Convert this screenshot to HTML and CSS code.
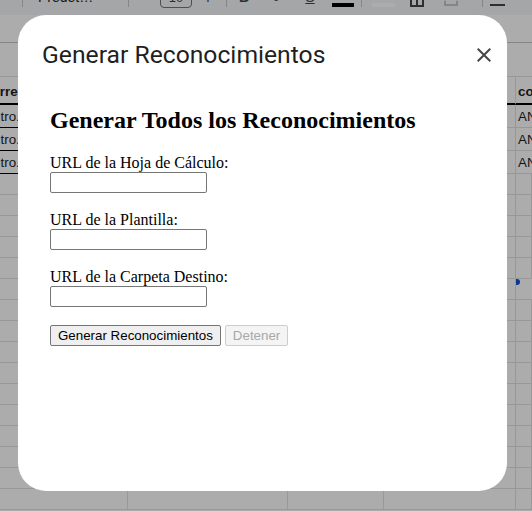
FILE: index.html
```html
<!DOCTYPE html>
<html lang="es">
<head>
<meta charset="utf-8">
<title>Generar Reconocimientos</title>
<link rel="stylesheet" href="styles.css">
</head>
<body>
<div class="sheet">
  <div class="toolbar">
    <span class="sep s1"></span>
    <span class="tb-text font">Predeterminado</span>
    <span class="sep s2"></span>
    <span class="size-box">10</span>
    <span class="tb-text plus">+</span>
    <span class="sep s3"></span>
    <span class="tb-text bold">B</span>
    <span class="tb-text ital">I</span>
    <span class="tb-text strike">S</span>
    <span class="color-bar"></span>
    <span class="sep s4"></span>
    <span class="fill-bar"></span>
    <span class="icon-borders"></span>
    <span class="icon-merge"></span>
    <span class="sep s5"></span>
    <span class="icon-align"></span>
  </div>
  <div class="formula-bar"></div>
  <div class="col-headers"></div>
  <div class="grid">
    <div class="row head">
      <div class="cell c1"><span class="cut">Correo</span></div><div class="cell"></div><div class="cell"></div><div class="cell"></div><div class="cell c5">correo</div>
    </div>
    <div class="row data">
      <div class="cell c1"><span class="cut2">centro.cl</span></div><div class="cell"></div><div class="cell"></div><div class="cell"></div><div class="cell c5">ANA</div>
    </div>
    <div class="row data">
      <div class="cell c1"><span class="cut2">centro.cl</span></div><div class="cell"></div><div class="cell"></div><div class="cell"></div><div class="cell c5">ANA</div>
    </div>
    <div class="row data">
      <div class="cell c1"><span class="cut2">centro.cl</span></div><div class="cell"></div><div class="cell"></div><div class="cell"></div><div class="cell c5">ANA</div>
    </div>
    <div class="row"><div class="cell"></div><div class="cell"></div><div class="cell"></div><div class="cell"></div><div class="cell"></div></div>
    <div class="row"><div class="cell"></div><div class="cell"></div><div class="cell"></div><div class="cell"></div><div class="cell"></div></div>
    <div class="row"><div class="cell"></div><div class="cell"></div><div class="cell"></div><div class="cell"></div><div class="cell"></div></div>
    <div class="row"><div class="cell"></div><div class="cell"></div><div class="cell"></div><div class="cell"></div><div class="cell"></div></div>
    <div class="row"><div class="cell"></div><div class="cell"></div><div class="cell"></div><div class="cell"></div><div class="cell"></div></div>
    <div class="row"><div class="cell"></div><div class="cell"></div><div class="cell"></div><div class="cell"></div><div class="cell c5"><span class="handle"></span></div></div>
    <div class="row"><div class="cell"></div><div class="cell"></div><div class="cell"></div><div class="cell"></div><div class="cell"></div></div>
    <div class="row"><div class="cell"></div><div class="cell"></div><div class="cell"></div><div class="cell"></div><div class="cell"></div></div>
    <div class="row"><div class="cell"></div><div class="cell"></div><div class="cell"></div><div class="cell"></div><div class="cell"></div></div>
    <div class="row"><div class="cell"></div><div class="cell"></div><div class="cell"></div><div class="cell"></div><div class="cell"></div></div>
    <div class="row"><div class="cell"></div><div class="cell"></div><div class="cell"></div><div class="cell"></div><div class="cell"></div></div>
    <div class="row"><div class="cell"></div><div class="cell"></div><div class="cell"></div><div class="cell"></div><div class="cell"></div></div>
    <div class="row"><div class="cell"></div><div class="cell"></div><div class="cell"></div><div class="cell"></div><div class="cell"></div></div>
    <div class="row"><div class="cell"></div><div class="cell"></div><div class="cell"></div><div class="cell"></div><div class="cell"></div></div>
    <div class="row"><div class="cell"></div><div class="cell"></div><div class="cell"></div><div class="cell"></div><div class="cell"></div></div>
    <div class="row"><div class="cell"></div><div class="cell"></div><div class="cell"></div><div class="cell"></div><div class="cell"></div></div>
  </div>
</div>
<div class="scrim"></div>
<div class="dialog" role="dialog" aria-labelledby="dlg-title">
  <div class="dlg-head">
    <h1 class="dlg-title" id="dlg-title">Generar Reconocimientos</h1>
    <button class="close" aria-label="Cerrar">
      <svg viewBox="0 0 24 24" width="24" height="24"><path d="M19 6.41L17.59 5 12 10.59 6.41 5 5 6.41 10.59 12 5 17.59 6.41 19 12 13.41 17.59 19 19 17.59 13.41 12z"/></svg>
    </button>
  </div>
  <div class="dlg-body">
    <h2 class="page-title">Generar Todos los Reconocimientos</h2>
    <label class="field-label" for="sheetUrl">URL de la Hoja de Cálculo:</label><br>
    <input class="field" type="text" id="sheetUrl"><br><br>
    <label class="field-label" for="templateUrl">URL de la Plantilla:</label><br>
    <input class="field" type="text" id="templateUrl"><br><br>
    <label class="field-label" for="folderUrl">URL de la Carpeta Destino:</label><br>
    <input class="field" type="text" id="folderUrl"><br><br>
    <button class="btn">Generar Reconocimientos</button>
    <button class="btn" disabled>Detener</button>
  </div>
</div>
</body>
</html>
```

FILE: styles.css
```css
* { box-sizing: border-box; }

html, body {
  margin: 0;
  padding: 0;
}

body {
  width: 532px;
  height: 511px;
  overflow: hidden;
  position: relative;
  font-family: "Liberation Sans", Arial, sans-serif;
  background: #fff;
}

/* ---------- background spreadsheet ---------- */
.sheet {
  display: flex;
  flex-direction: column;
  height: 511px;
  background: #fff;
}

.toolbar {
  flex: 0 0 15px;
  height: 15px;
  background: #f3f6fa;
  display: flex;
  align-items: flex-start;
  overflow: hidden;
  color: #444746;
}

.sep {
  flex: 0 0 1px;
  width: 1px;
  height: 20px;
  margin-top: -13px;
  background: #c7c7c7;
}
.s1 { margin-left: 22px; }
.s2 { margin-left: 34px; }
.s3 { margin-left: 11px; }
.s4 { margin-left: 7px; }
.s5 { margin-left: 24px; }

.tb-text {
  flex: 0 0 14px;
  width: 14px;
  font-size: 14px;
  line-height: 20px;
  margin-top: -13px;
  white-space: nowrap;
  text-align: center;
  overflow: hidden;
}
.font {
  flex: 0 0 56px;
  width: 56px;
  margin-left: 15px;
  text-align: left;
  text-overflow: ellipsis;
  color: #1f1f1f;
}
.plus { margin-left: 9px; font-size: 16px; margin-top: -12px; }
.bold { margin-left: 10px; font-weight: bold; }
.ital { margin-left: 18px; font-family: "Liberation Serif", serif; }
.strike { margin-left: 20px; text-decoration: underline; }

.size-box {
  flex: 0 0 32px;
  margin-left: 31px;
  width: 32px;
  height: 20px;
  margin-top: -12px;
  border: 1px solid #747775;
  border-radius: 4px;
  font-size: 13px;
  line-height: 18px;
  text-align: center;
}

.color-bar {
  flex: 0 0 22px;
  margin-left: 15px;
  width: 22px;
  height: 4px;
  margin-top: 3px;
  background: #000;
}
.fill-bar {
  flex: 0 0 23px;
  margin-left: 10px;
  width: 23px;
  height: 4px;
  margin-top: 3px;
  background: #fff;
}
.icon-borders {
  flex: 0 0 14px;
  margin-left: 15px;
  width: 14px;
  height: 14px;
  margin-top: -7px;
  border: 2px solid #444746;
  border-top: 0;
  background: linear-gradient(#444746, #444746) center / 2px 100% no-repeat;
}
.icon-merge {
  flex: 0 0 14px;
  margin-left: 20px;
  width: 14px;
  height: 14px;
  margin-top: -8px;
  border: 2px solid #c4c7c5;
  border-top: 0;
  border-left-style: dashed;
  border-right-style: dashed;
}
.icon-align {
  flex: 0 0 15px;
  margin-left: 7px;
  width: 15px;
  height: 8px;
  margin-top: -2px;
  border-bottom: 2px solid #444746;
  background: linear-gradient(#444746, #444746) left top / 15px 2px no-repeat;
}

.formula-bar {
  flex: 0 0 28px;
  background: #fff;
  border-bottom: 1px solid #c7c7c7;
}
.col-headers {
  flex: 0 0 34px;
  background: #fff;
  border-bottom: 1px solid #e1e1e1;
}

.grid {
  display: flex;
  flex-direction: column;
}

.row {
  display: grid;
  grid-template-columns: 128px 160px 96px 132px 1fr;
  height: 21px;
  font-size: 13.33px;
  color: #1f1f1f;
}
.row.head { height: 28px; font-weight: bold; }
.row.data { height: 23px; }

.cell {
  border-right: 1px solid #e1e1e1;
  border-bottom: 1px solid #e1e1e1;
  display: flex;
  align-items: flex-end;
  padding: 0 3px 2px 3px;
  overflow: hidden;
  white-space: nowrap;
  line-height: 16px;
  position: relative;
}
.row.head .cell { border-bottom: 2px solid #000; padding-bottom: 3px; }
.row.data .c1 { border-bottom-color: #000; }
.c1 { padding-left: 0; }
.c5 { padding-left: 2px; border-right: 0; }

.cut { margin-left: -18px; }
.cut2 { margin-left: -21px; }

.handle {
  position: absolute;
  left: 0;
  top: 0;
  width: 4px;
  height: 6px;
  border-radius: 0 4px 4px 0;
  background: #0b57d0;
}

.scrim {
  position: absolute;
  inset: 0;
  background: rgba(0, 0, 0, 0.325);
}

/* ---------- dialog ---------- */
.dialog {
  position: absolute;
  left: 18px;
  top: 15px;
  width: 489px;
  height: 476px;
  border-radius: 28px;
  background: #fff;
  display: flex;
  flex-direction: column;
  overflow: hidden;
}

.dlg-head {
  display: flex;
  align-items: center;
  padding: 24px 11px 15px 24px;
}

.dlg-title {
  flex: 1;
  margin: 0;
  font-family: Roboto, "Noto Sans", sans-serif;
  font-weight: 400;
  font-size: 24.7px;
  line-height: 32px;
  color: #1f1f1f;
}

.close {
  width: 24px;
  height: 24px;
  padding: 0;
  border: 0;
  background: transparent;
  display: flex;
  align-items: center;
  justify-content: center;
}
.close svg { display: block; fill: #444746; }

.dlg-body {
  flex: 1;
  padding: 0 0 0 32px;
  font-family: "Liberation Serif", "Times New Roman", serif;
  font-size: 16px;
  color: #000;
}

.page-title {
  margin: 21px 0 20px;
  font-size: 24px;
  font-weight: bold;
}

.field-label { font-size: 16px; }

.field {
  width: 157px;
  height: 21px;
  padding: 1px 2px;
  border: 1px solid #767676;
  border-radius: 2px;
  font-family: "Liberation Sans", Arial, sans-serif;
  font-size: 13.33px;
  background: #fff;
}

.btn {
  height: 21px;
  padding: 1px 7px;
  border: 1px solid #767676;
  border-radius: 2px;
  background: #efefef;
  color: #000;
  font-family: "Liberation Sans", Arial, sans-serif;
  font-size: 13.33px;
}
.btn:disabled {
  color: #a8a8a8;
  background: #f4f4f4;
  border-color: #cdcdcd;
}
```
